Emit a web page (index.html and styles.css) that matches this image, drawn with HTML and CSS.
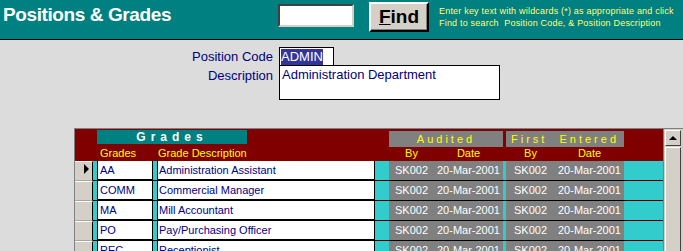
FILE: index.html
```html
<!DOCTYPE html>
<html lang="en">
<head>
    <meta charset="UTF-8">
    <title>Positions &amp; Grades</title>
    <link rel="stylesheet" href="styles.css">
</head>
<body>
    <!-- title bar with search -->
    <div class="topbar">
        <h1 class="title">Positions &amp; Grades</h1>
        <input class="search" type="text">
        <button class="find" type="button"><u>F</u>ind</button>
        <p class="hint">Enter key text with wildcards (*) as appropriate and click<br>Find to search&nbsp; Position Code, &amp; Position Description</p>
    </div>

    <!-- position record -->
    <div class="form">
        <label class="lbl">Position Code</label>
        <div class="code"><span class="hl">ADMIN</span></div>
        <label class="lbl">Description</label>
        <div class="desc">Administration Department</div>
    </div>

    <!-- grades subform -->
    <div class="grid-wrap">
        <div class="grid">
            <div class="head">
                <div class="head-top">
                    <div class="grp-grades">Grades</div>
                    <div class="grp grp-aud">Audited</div>
                    <div class="grp grp-first">First&nbsp; Entered</div>
                </div>
                <div class="head-lbl">
                    <span class="h-code">Grades</span>
                    <span class="h-desc">Grade Description</span>
                    <span class="h-by1">By</span>
                    <span class="h-date1">Date</span>
                    <span class="h-by2">By</span>
                    <span class="h-date2">Date</span>
                </div>
            </div>

            <div class="row">
                <div class="sel"><i class="cur"></i></div>
                <div class="gap"></div>
                <div class="cell c-code">AA</div>
                <div class="gap"></div>
                <div class="cell c-desc">Administration Assistant</div>
                <div class="gap gap-wide"></div>
                <div class="grey g1"><span class="by1">SK002</span><span class="date1">20-Mar-2001</span></div>
                <div class="gap gap-thin"></div>
                <div class="grey g2"><span class="by2">SK002</span><span class="date2">20-Mar-2001</span></div>
                <div class="gap gap-end"></div>
            </div>
            <div class="row">
                <div class="sel"></div>
                <div class="gap"></div>
                <div class="cell c-code">COMM</div>
                <div class="gap"></div>
                <div class="cell c-desc">Commercial Manager</div>
                <div class="gap gap-wide"></div>
                <div class="grey g1"><span class="by1">SK002</span><span class="date1">20-Mar-2001</span></div>
                <div class="gap gap-thin"></div>
                <div class="grey g2"><span class="by2">SK002</span><span class="date2">20-Mar-2001</span></div>
                <div class="gap gap-end"></div>
            </div>
            <div class="row">
                <div class="sel"></div>
                <div class="gap"></div>
                <div class="cell c-code">MA</div>
                <div class="gap"></div>
                <div class="cell c-desc">Mill Accountant</div>
                <div class="gap gap-wide"></div>
                <div class="grey g1"><span class="by1">SK002</span><span class="date1">20-Mar-2001</span></div>
                <div class="gap gap-thin"></div>
                <div class="grey g2"><span class="by2">SK002</span><span class="date2">20-Mar-2001</span></div>
                <div class="gap gap-end"></div>
            </div>
            <div class="row">
                <div class="sel"></div>
                <div class="gap"></div>
                <div class="cell c-code">PO</div>
                <div class="gap"></div>
                <div class="cell c-desc">Pay/Purchasing Officer</div>
                <div class="gap gap-wide"></div>
                <div class="grey g1"><span class="by1">SK002</span><span class="date1">20-Mar-2001</span></div>
                <div class="gap gap-thin"></div>
                <div class="grey g2"><span class="by2">SK002</span><span class="date2">20-Mar-2001</span></div>
                <div class="gap gap-end"></div>
            </div>
            <div class="row">
                <div class="sel"></div>
                <div class="gap"></div>
                <div class="cell c-code">REC</div>
                <div class="gap"></div>
                <div class="cell c-desc">Receptionist</div>
                <div class="gap gap-wide"></div>
                <div class="grey g1"><span class="by1">SK002</span><span class="date1">20-Mar-2001</span></div>
                <div class="gap gap-thin"></div>
                <div class="grey g2"><span class="by2">SK002</span><span class="date2">20-Mar-2001</span></div>
                <div class="gap gap-end"></div>
            </div>
        </div>
        <!-- scrollbar -->
        <div class="vscroll">
            <div class="up"><i class="arrow"></i></div>
            <div class="thumb"></div>
        </div>
    </div>
</body>
</html>
```
FILE: styles.css
```css
body{
    margin: 0;
    height: 251px;
    overflow: hidden;
    background-color: #dcdcdc;
    font-family: "Liberation Sans", Arial, sans-serif;
}
/* title bar */
.topbar{
    display: flex;
    align-items: flex-start;
    height: 39px;
    padding-left: 3px;
    background-color: #008080;
    border-bottom: 1px solid #000;
}
.title{
    width: 275px;
    margin: 0;
    font-size: 19px;
    line-height: 29px;
    font-weight: bold;
    letter-spacing: -0.4px;
    color: #fff;
}
.search{
    box-sizing: border-box;
    width: 76px;
    height: 23px;
    margin: 4px 0 0 0;
    padding: 0;
    border: 2px solid;
    border-color: #404040 #d4d0c8 #d4d0c8 #404040;
    background-color: #fff;
}
.find{
    box-sizing: border-box;
    width: 60px;
    height: 30px;
    margin: 2px 0 0 15px;
    padding: 0;
    border: 2px solid;
    border-color: #fff #000 #000 #fff;
    background-color: #d4d0c8;
    font-family: "Liberation Sans", Arial, sans-serif;
    font-size: 19px;
    font-weight: bold;
    color: #000;
    box-shadow: inset -1px -1px 0 #808080;
}
.hint{
    margin: 5px 0 0 10px;
    font-size: 9px;
    line-height: 12px;
    letter-spacing: 0.2px;
    color: #ffff80;
    white-space: nowrap;
}
/* record form */
.form{
    display: grid;
    grid-template-columns: 273px auto;
    column-gap: 6px;
    margin-top: 7px;
    font-size: 13px;
    color: #000080;
}
.lbl{
    text-align: right;
    line-height: 19px;
}
.code{
    box-sizing: border-box;
    width: 55px;
    height: 19px;
    padding: 1px 0 0 1px;
    border: 1px solid #000;
    background-color: #fff;
    line-height: 16px;
}
.hl{
    display: inline-block;
    background-color: #333399;
    color: #fff;
}
.desc{
    box-sizing: border-box;
    width: 221px;
    height: 35px;
    margin-top: -1px;
    padding: 1px 0 0 2px;
    border: 1px solid #000;
    background-color: #fff;
    line-height: 16px;
}
/* grades subform */
.grid-wrap{
    display: flex;
    margin: 28px 0 0 74px;
    border-top: 1px solid #808080;
    border-left: 1px solid #808080;
    font-size: 11px;
}
.grid{
    width: 588px;
    flex: none;
}
.head{
    height: 32px;
    background-color: #800000;
}
.head-top{
    display: flex;
    align-items: flex-start;
    height: 18px;
}
.grp-grades{
    width: 150px;
    height: 14px;
    margin: 1px 0 0 22px;
    background-color: #008080;
    color: #fff;
    font-weight: bold;
    font-size: 12px;
    line-height: 14px;
    letter-spacing: 5px;
    text-align: center;
}
.grp{
    height: 16px;
    margin-top: 2px;
    background-color: #808080;
    color: #ffff00;
    line-height: 16px;
    letter-spacing: 3px;
    text-align: center;
}
.grp-aud{
    width: 114px;
    margin-left: 142px;
}
.grp-first{
    width: 118px;
    margin-left: 3px;
}
.head-lbl{
    display: flex;
    height: 14px;
    line-height: 13px;
    color: #ffff00;
}
.head-lbl span{
    flex: none;
}
.h-code{ width: 83px; padding-left: 25px; box-sizing: border-box; }
.h-desc{ width: 231px; }
.h-by1, .by1{ width: 45px; text-align: center; }
.h-date1, .date1{ width: 69px; text-align: center; }
.h-by2, .by2{ width: 49px; text-align: center; }
.h-date2, .date2{ width: 69px; text-align: center; }
.h-by2{ margin-left: 3px; }
.row{
    display: flex;
    height: 20px;
}
.row > div{
    box-sizing: border-box;
    flex: none;
    height: 20px;
    line-height: 18px;
    border-bottom: 1px solid #000;
}
.row > .sel{
    position: relative;
    width: 18px;
    border-top: 1px solid #fff;
    border-bottom: 1px solid #a8a49c;
    border-right: 1px solid #000;
    background-color: #d4d0c8;
}
.cur{
    position: absolute;
    top: 2px;
    left: 9px;
    border-left: 5px solid #000;
    border-top: 5px solid transparent;
    border-bottom: 5px solid transparent;
}
.gap{
    width: 4px;
    background-color: #33cccc;
}
.gap-wide{ width: 14px; }
.gap-thin{ width: 3px; }
.gap-end{ width: 39px; }
.row > .cell{
    border-left: 1px solid #000;
    border-right: 1px solid #000;
    border-bottom: 2px solid #000;
    background-color: #fff;
    color: #000080;
    white-space: nowrap;
    overflow: hidden;
}
.c-code{
    width: 56px;
    padding-left: 2px;
}
.c-desc{
    width: 218px;
    padding-left: 1px;
}
.grey{
    display: flex;
    background-color: #808080;
    color: #fff;
}
.grey span{
    flex: none;
}
.g1{ width: 114px; }
.g2{ width: 118px; }
/* scrollbar */
.vscroll{
    width: 20px;
    flex: none;
    padding: 1px 0 0 1px;
    border-left: 1px solid #808080;
    background-color: #d4d0c8;
}
.up, .thumb{
    box-sizing: border-box;
    width: 16px;
    border: 1px solid;
    border-color: #fff #404040 #404040 #fff;
    background-color: #d4d0c8;
}
.up{
    position: relative;
    height: 16px;
}
.arrow{
    position: absolute;
    top: 5px;
    left: 3px;
    border-bottom: 4px solid #000;
    border-left: 4px solid transparent;
    border-right: 4px solid transparent;
}
.thumb{
    height: 120px;
    margin-top: 1px;
}
```
